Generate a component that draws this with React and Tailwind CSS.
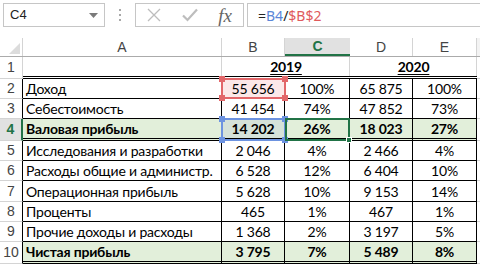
import React from 'react';

const rows = [
  { n: 2, label: 'Доход', vals: ['55 656', '100%', '65 875', '100%'] },
  { n: 3, label: 'Себестоимость', vals: ['41 454', '74%', '47 852', '73%'] },
  { n: 4, label: 'Валовая прибыль', vals: ['14 202', '26%', '18 023', '27%'], total: true },
  { n: 5, label: 'Исследования и разработки', vals: ['2 046', '4%', '2 466', '4%'] },
  { n: 6, label: 'Расходы общие и администр.', vals: ['6 528', '12%', '6 404', '10%'] },
  { n: 7, label: 'Операционная прибыль', vals: ['5 628', '10%', '9 153', '14%'], h: 'h-[21px]' },
  { n: 8, label: 'Проценты', vals: ['465', '1%', '467', '1%'] },
  { n: 9, label: 'Прочие доходы и расходы', vals: ['1 368', '2%', '3 197', '5%'] },
  { n: 10, label: 'Чистая прибыль', vals: ['3 795', '7%', '5 489', '8%'], total: true },
];

const colWidths = ['w-[63px]', 'w-[65px]', 'w-[63px]', 'w-[64px]'];

const Handle = ({ className }) => (
  <div className={`absolute w-[6px] h-[6px] ${className}`} />
);

const FormulaBar = () => (
  <div className="h-[38px] flex items-start pt-[3px] font-['Liberation_Sans',sans-serif]">
    <div className="ml-[3px] w-[102px] h-[24px] border border-[#c6c6c6] flex items-center justify-between pl-[6px] pr-[6px] text-[13px] text-[#222]">
      <span>C4</span>
      <svg width="9" height="5" viewBox="0 0 9 5">
        <path d="M0 0 L9 0 L4.5 5 Z" fill="#7a7a7a" />
      </svg>
    </div>
    <div className="w-[30px] h-[24px] flex flex-col items-center justify-center gap-[3px]">
      <div className="w-[2px] h-[2px] bg-[#a8a8a8]" />
      <div className="w-[2px] h-[2px] bg-[#a8a8a8]" />
      <div className="w-[2px] h-[2px] bg-[#a8a8a8]" />
    </div>
    <div className="w-[109px] h-[24px] border border-[#c6c6c6] flex items-center">
      <div className="w-[36px] flex justify-center">
        <svg width="16" height="16" viewBox="0 0 16 16">
          <path d="M2 2 L14 14 M14 2 L2 14" stroke="#bdbdbd" strokeWidth="1.3" />
        </svg>
      </div>
      <div className="w-[36px] flex justify-center">
        <svg width="18" height="16" viewBox="0 0 18 16">
          <path d="M2 8.5 L6.5 13 L16 2.5" stroke="#bdbdbd" strokeWidth="2.2" fill="none" />
        </svg>
      </div>
      <div className="w-[36px] flex justify-center text-[19px] italic text-[#666] font-['Liberation_Serif',serif] leading-none">
        fx
      </div>
    </div>
    <div className="ml-[3px] flex-1 h-[24px] border border-r-0 border-[#c6c6c6] flex items-center pl-[10px] text-[14px] font-['Noto_Sans',sans-serif]">
      <span className="text-[#222]">=</span>
      <span className="text-[#5b86d8]">B4</span>
      <span className="text-[#222]">/</span>
      <span className="text-[#e05a5c]">$B$2</span>
    </div>
  </div>
);

const App = () => {
  return (
    <div className="w-[480px] h-[265px] overflow-hidden bg-white relative">
      <FormulaBar />
      <div className="relative font-['Lato','Noto_Sans',sans-serif] text-[14px] tracking-[-0.2px] text-black">
        {/* column headers */}
        <div className="flex h-[19px] border-b border-[#ababab] text-[14px] tracking-normal text-[#444] font-['Liberation_Sans',sans-serif]">
          <div className="w-[23px] shrink-0 border-r border-[#d4d4d4] relative">
            <svg className="absolute right-[2px] bottom-[2px]" width="11" height="11" viewBox="0 0 11 11">
              <path d="M11 0 L11 11 L0 11 Z" fill="#dcdcdc" />
            </svg>
          </div>
          <div className="w-[199px] shrink-0 border-r border-[#d4d4d4] flex items-center justify-center">A</div>
          <div className="w-[63px] shrink-0 border-r border-[#d4d4d4] flex items-center justify-center">B</div>
          <div className="w-[65px] shrink-0 bg-[#e1e1e1] border-b-2 border-[#217346] flex items-center justify-center text-[#217346] font-bold">C</div>
          <div className="w-[63px] shrink-0 border-r border-[#d4d4d4] flex items-center justify-center">D</div>
          <div className="w-[64px] shrink-0 border-r border-[#d4d4d4] flex items-center justify-center">E</div>
          <div className="flex-1 bg-[#f3f3f3]" />
        </div>

        {/* row 1 */}
        <div className="flex h-[22px]">
          <div className="w-[23px] shrink-0 border-r border-b border-[#d4d4d4] flex items-center justify-center text-[14px] tracking-normal text-[#444] font-['Liberation_Sans',sans-serif]">1</div>
          <div className="w-[199px] shrink-0 border-b-[3px] border-double border-black relative">
            <div className="absolute right-0 top-0 bottom-0 w-px bg-[#d4d4d4]" />
          </div>
          <div className="w-[128px] shrink-0 border-b-[3px] border-double border-black flex items-center justify-center font-bold relative">
            <span className="underline underline-offset-2">2019</span>
            <div className="absolute right-0 top-0 bottom-0 w-px bg-[#d4d4d4]" />
          </div>
          <div className="w-[127px] shrink-0 border-b-[3px] border-double border-black flex items-center justify-center font-bold relative">
            <span className="underline underline-offset-2">2020</span>
            <div className="absolute right-0 top-0 bottom-0 w-px bg-[#d4d4d4]" />
          </div>
          <div className="flex-1 border-b border-[#d4d4d4]" />
        </div>

        {rows.map((r) => {
          const bottom = r.total ? 'border-b-[3px] border-double' : 'border-b';
          const h = r.total ? 'h-[22px]' : r.h || 'h-[20px]';
          const bg = r.total ? 'bg-[#e2efda]' : 'bg-white';
          const selectedRow = r.n === 4;
          return (
            <div key={r.n} className={`flex ${h}`}>
              <div
                className={`w-[23px] shrink-0 border-b border-[#d4d4d4] flex items-center justify-center text-[14px] tracking-normal font-['Liberation_Sans',sans-serif] ${
                  selectedRow
                    ? 'bg-[#e1e1e1] text-[#217346] font-bold border-r-2 border-r-[#217346]'
                    : 'text-[#444] border-r border-r-black'
                }`}
              >
                {r.n}
              </div>
              <div
                className={`w-[199px] shrink-0 ${bottom} border-r border-black ${bg} flex items-center pl-[3px] whitespace-nowrap overflow-hidden ${
                  r.total ? 'font-bold' : ''
                }`}
              >
                {r.label}
              </div>
              {r.vals.map((v, i) => (
                <div
                  key={i}
                  className={`${colWidths[i]} shrink-0 ${bottom} border-r border-black ${
                    selectedRow && i === 0 ? 'bg-[#d5e2d9]' : r.n === 2 && i === 0 ? 'bg-[#fce8e8]' : bg
                  } flex items-center justify-center ${r.total ? 'font-bold' : ''}`}
                >
                  {v}
                </div>
              ))}
              <div className="flex-1 border-b border-[#d4d4d4]" />
            </div>
          );
        })}

        {/* selection overlays */}
        <div className="absolute left-[221px] top-[40px] w-[65px] h-[21px] border-2 border-[#e2676a]">
          <Handle className="bg-[#e2676a] -left-[4px] -top-[4px]" />
          <Handle className="bg-[#e2676a] -right-[4px] -top-[4px]" />
          <Handle className="bg-[#e2676a] -left-[4px] -bottom-[4px]" />
          <Handle className="bg-[#e2676a] -right-[4px] -bottom-[4px]" />
        </div>
        <div className="absolute left-[221px] top-[80px] w-[65px] h-[23px] border-2 border-[#6d93e0]">
          <Handle className="bg-[#6d93e0] -left-[4px] -top-[4px]" />
          <Handle className="bg-[#6d93e0] -right-[4px] -top-[4px]" />
          <Handle className="bg-[#6d93e0] -left-[4px] -bottom-[4px]" />
          <Handle className="bg-[#6d93e0] -right-[4px] -bottom-[4px]" />
        </div>
        <div className="absolute left-[285px] top-[80px] w-[65px] h-[23px] border-2 border-[#217346]">
          <Handle className="bg-[#217346] -right-[4px] -bottom-[4px] border border-white" />
        </div>
      </div>
    </div>
  );
};

export default App;
